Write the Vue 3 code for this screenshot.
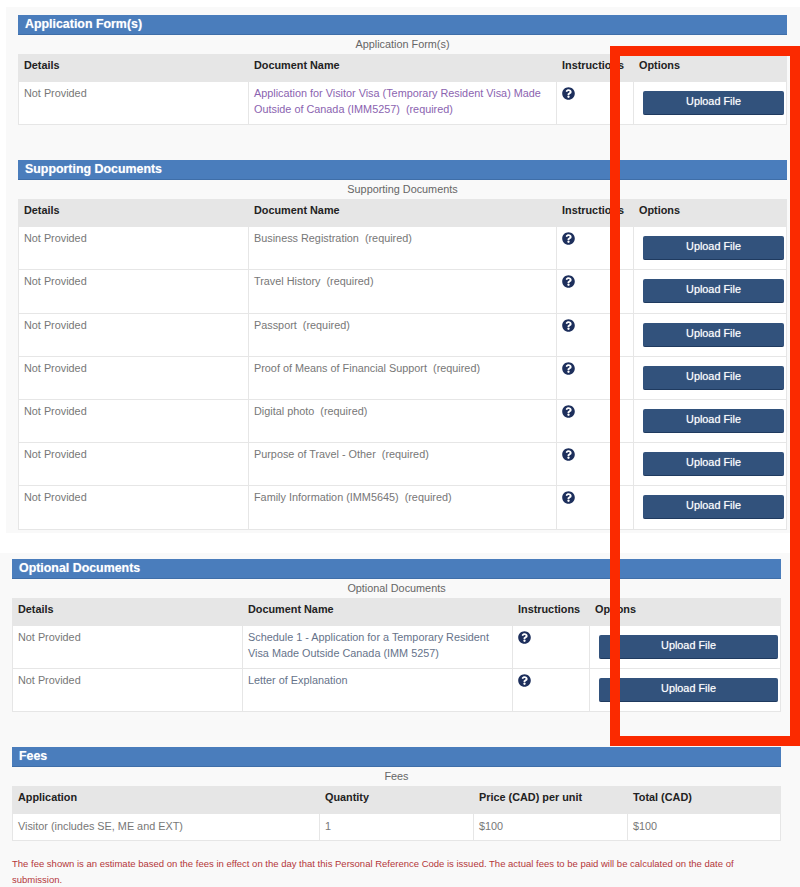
<script setup>
const upper = [
  {
    title: 'Application Form(s)',
    rows: [
      { name: 'Application for Visitor Visa (Temporary Resident Visa) Made Outside of Canada (IMM5257)', required: true, visited: true }
    ]
  },
  {
    title: 'Supporting Documents',
    rows: [
      { name: 'Business Registration', required: true },
      { name: 'Travel History', required: true },
      { name: 'Passport', required: true },
      { name: 'Proof of Means of Financial Support', required: true },
      { name: 'Digital photo', required: true },
      { name: 'Purpose of Travel - Other', required: true },
      { name: 'Family Information (IMM5645)', required: true }
    ]
  }
]

const optional = [
  { name: 'Schedule 1 - Application for a Temporary Resident Visa Made Outside Canada (IMM 5257)' },
  { name: 'Letter of Explanation' }
]

const iconPath = 'M504 256c0 136.997-111.043 248-248 248S8 392.997 8 256C8 119.083 119.043 8 256 8s248 111.083 248 248zM262.655 90c-54.497 0-89.255 22.957-116.549 63.758-3.536 5.286-2.353 12.415 2.715 16.258l34.699 26.31c5.205 3.947 12.621 3.008 16.665-2.122 17.864-22.658 30.113-35.797 57.303-35.797 20.429 0 45.698 13.148 45.698 32.958 0 14.976-12.363 22.667-32.534 33.976C247.128 238.528 216 254.941 216 296v4c0 6.627 5.373 12 12 12h56c6.627 0 12-5.373 12-12v-1.333c0-28.462 83.186-29.647 83.186-106.667 0-58.002-60.165-102-116.531-102zM256 338c-25.365 0-46 20.635-46 46 0 25.364 20.635 46 46 46s46-20.636 46-46c0-25.365-20.635-46-46-46z'
</script>

<template>
  <div class="page">
    <div class="upper">
      <section v-for="section in upper" :key="section.title" class="section">
        <h2 class="bar">{{ section.title }}</h2>
        <table class="docs">
          <caption>{{ section.title }}</caption>
          <colgroup>
            <col class="c-details" />
            <col class="c-name" />
            <col class="c-help" />
            <col />
          </colgroup>
          <thead>
            <tr>
              <th>Details</th>
              <th>Document Name</th>
              <th>Instructions</th>
              <th>Options</th>
            </tr>
          </thead>
          <tbody>
            <tr v-for="row in section.rows" :key="row.name">
              <td>Not Provided</td>
              <td :class="{ visited: row.visited }">{{ row.name }}&nbsp; (required)</td>
              <td>
                <svg class="help" viewBox="0 0 512 512"><path :d="iconPath" /></svg>
              </td>
              <td class="opt"><button type="button" class="upload">Upload File</button></td>
            </tr>
          </tbody>
        </table>
      </section>
    </div>

    <div class="lower">
      <section class="section">
        <h2 class="bar">Optional Documents</h2>
        <table class="docs">
          <caption>Optional Documents</caption>
          <colgroup>
            <col class="c-details" />
            <col class="c-name-short" />
            <col class="c-help" />
            <col />
          </colgroup>
          <thead>
            <tr>
              <th>Details</th>
              <th>Document Name</th>
              <th>Instructions</th>
              <th>Options</th>
            </tr>
          </thead>
          <tbody>
            <tr v-for="row in optional" :key="row.name">
              <td>Not Provided</td>
              <td class="doc">{{ row.name }}</td>
              <td>
                <svg class="help" viewBox="0 0 512 512"><path :d="iconPath" /></svg>
              </td>
              <td class="opt"><button type="button" class="upload">Upload File</button></td>
            </tr>
          </tbody>
        </table>
      </section>

      <section class="section">
        <h2 class="bar">Fees</h2>
        <table class="docs">
          <caption>Fees</caption>
          <colgroup>
            <col class="c-app" />
            <col class="c-fee" />
            <col class="c-fee" />
            <col />
          </colgroup>
          <thead>
            <tr>
              <th>Application</th>
              <th>Quantity</th>
              <th>Price (CAD) per unit</th>
              <th>Total (CAD)</th>
            </tr>
          </thead>
          <tbody>
            <tr class="short">
              <td>Visitor (includes SE, ME and EXT)</td>
              <td>1</td>
              <td>$100</td>
              <td>$100</td>
            </tr>
          </tbody>
        </table>
      </section>

      <p class="note">The fee shown is an estimate based on the fees in effect on the day that this Personal Reference Code is issued. The actual fees to be paid will be calculated on the date of submission.</p>
    </div>

    <!-- annotation drawn over the screenshot -->
    <div class="frame"></div>
  </div>
</template>

<style>
html,
body {
  background: #fff;
}
</style>

<style scoped>
.page {
  position: relative;
  height: 887px;
  overflow: hidden;
  font-family: "Liberation Sans", Arial, sans-serif;
  font-size: 10.85px;
  color: #777;
}

.upper {
  margin: 7px 0 0 6px;
  padding: 8px 13px 0 12px;
  height: 526px;
  box-sizing: border-box;
  background: #f9f9f9;
}

.lower {
  margin-top: 20px;
  padding: 6px 19px 0 12px;
  height: 334px;
  box-sizing: border-box;
  background: #f9f9f9;
}

.section + .section {
  margin-top: 35px;
}

.bar {
  margin: 0;
  height: 20px;
  padding-left: 7px;
  box-sizing: border-box;
  background: #4a7dbc;
  border-bottom: 1px solid #3f6ea8;
  color: #fff;
  font-size: 12.4px;
  font-weight: bold;
  line-height: 18px;
  text-shadow: 0 0 1px rgba(255, 255, 255, 0.5);
}

.docs {
  width: 100%;
  table-layout: fixed;
  border-collapse: collapse;
}

.docs caption {
  height: 19px;
  line-height: 19px;
  color: #666;
  text-align: center;
}

.c-details {
  width: 230px;
}

.c-name {
  width: 308px;
}

.c-name-short {
  width: 270px;
}

.c-help {
  width: 77px;
}

.c-app {
  width: 307px;
}

.c-fee {
  width: 154px;
}

th,
td {
  box-sizing: border-box;
  border: 1px solid #e6e6e6;
  padding: 3px 5px 0;
  text-align: left;
  vertical-align: top;
  line-height: 16px;
}

th {
  height: 27px;
  padding-top: 2px;
  background: #e6e6e6;
  color: #222;
  font-weight: bold;
  white-space: nowrap;
}

td {
  height: 43.2px;
  background: #fff;
}

.short td {
  height: 27px;
  padding-top: 4px;
}

.doc {
  color: #66738a;
}

.visited {
  color: #8b63b0;
}

.help {
  display: block;
  width: 13px;
  height: 13px;
  margin-top: 2px;
  fill: #1d2f5c;
}

td.opt {
  padding: 9px 2px 0 9px;
}

.upload {
  display: block;
  width: 100%;
  height: 24px;
  padding: 0 0 3px;
  border: none;
  border-bottom: 1px solid #1f3a5f;
  border-radius: 2px;
  background: #32527c;
  color: #fff;
  font: 10.85px "Liberation Sans", Arial, sans-serif;
  text-shadow: 0 0 1px rgba(255, 255, 255, 0.6);
}

.note {
  margin: 15px 0 0;
  color: #b4373a;
  font-size: 9.5px;
  line-height: 16px;
}

.frame {
  position: absolute;
  left: 610px;
  top: 46px;
  width: 190px;
  height: 700px;
  box-sizing: border-box;
  border: 10px solid #fb2a00;
}
</style>
